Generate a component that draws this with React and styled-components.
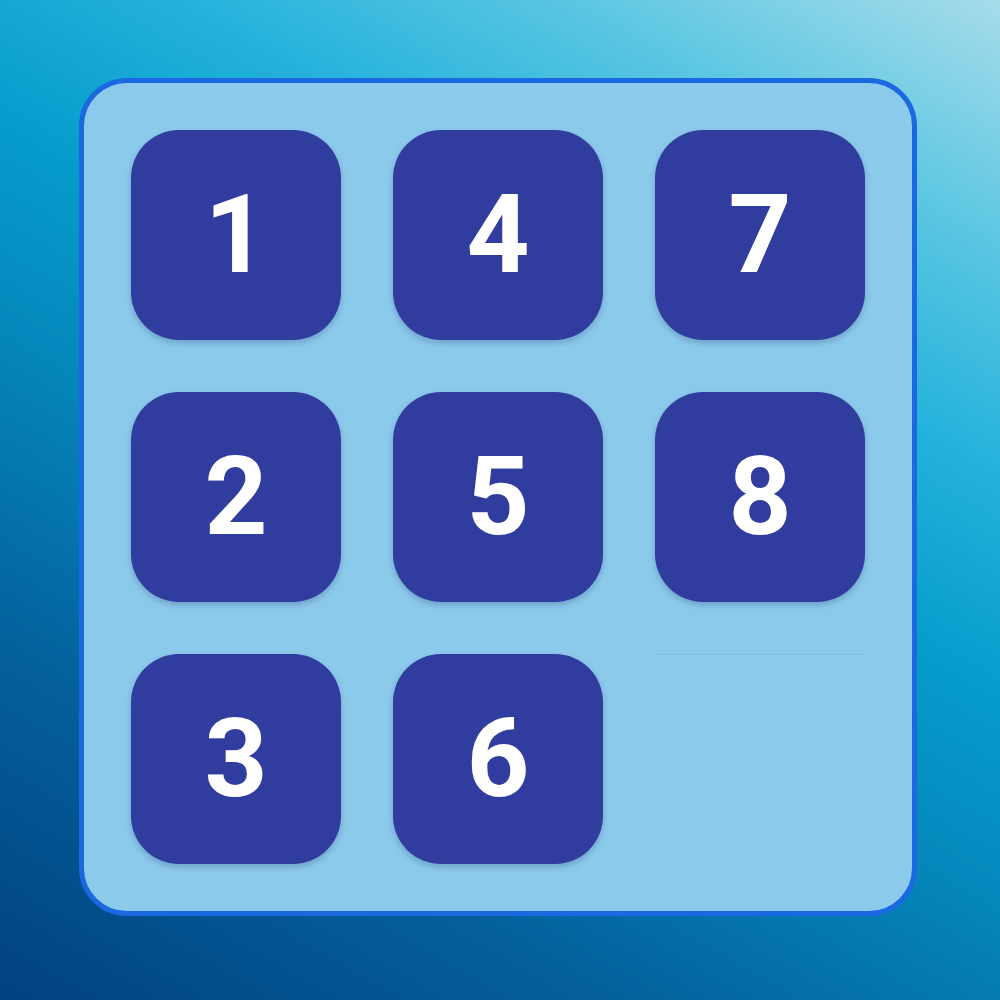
import React from "react";
import styled, { createGlobalStyle } from "styled-components";

const GlobalStyle = createGlobalStyle`
  html, body {
    margin: 0;
    padding: 0;
  }
  body {
    font-family: Roboto, "Liberation Sans", sans-serif;
  }
`;

const Page = styled.div`
  box-sizing: border-box;
  width: 1000px;
  height: 1000px;
  padding: 78px 0 0 79px;
  background: linear-gradient(
    30deg,
    #01427f 0%,
    #045f9c 22%,
    #0586bb 42%,
    #069ccc 56%,
    #24b2dc 70%,
    #5ac6e2 84%,
    #a6dcea 100%
  );
`;

const Board = styled.div`
  box-sizing: border-box;
  width: 838px;
  height: 838px;
  border: 5px solid #1a69e0;
  border-radius: 48px;
  background: #8ccaec;
  padding: 47px;
  display: grid;
  grid-template-columns: repeat(3, 210px);
  grid-template-rows: repeat(3, 210px);
  gap: 52px 52px;
`;

const Tile = styled.div`
  border-radius: 48px;
  background: #303c9e;
  box-shadow: 0 3px 6px rgba(20, 40, 90, 0.25);
  display: flex;
  align-items: center;
  justify-content: center;
  color: #ffffff;
  font-family: Roboto, "Liberation Sans", sans-serif;
  font-weight: 700;
  font-size: 110px;
  line-height: 1;
`;

const EmptySlot = styled.div`
  border-top: 1px solid rgba(110, 170, 215, 0.35);
`;

// column-major order, last slot empty
const tiles = [1, 4, 7, 2, 5, 8, 3, 6, null];

export default function App() {
  return (
    <>
      <GlobalStyle />
      <Page>
        <Board>
          {tiles.map((n, i) =>
            n ? <Tile key={i}>{n}</Tile> : <EmptySlot key={i} />
          )}
        </Board>
      </Page>
    </>
  );
}
